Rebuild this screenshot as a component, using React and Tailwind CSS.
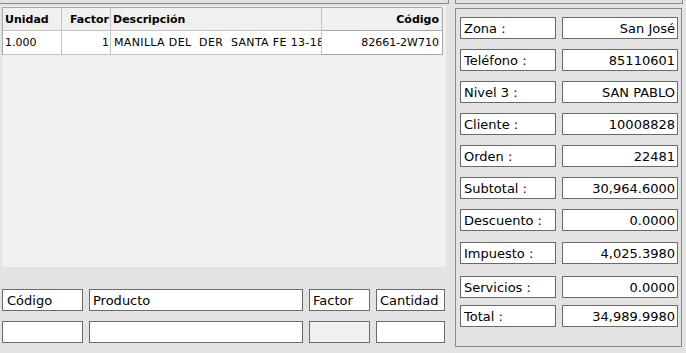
import React from "react";

const rows = [
  { label: "Zona :", value: "San José", mt: "mt-[8px]" },
  { label: "Teléfono :", value: "85110601", mt: "mt-[10px]" },
  { label: "Nivel 3 :", value: "SAN PABLO", mt: "mt-[10px]" },
  { label: "Cliente :", value: "10008828", mt: "mt-[10px]" },
  { label: "Orden :", value: "22481", mt: "mt-[10px]" },
  { label: "Subtotal :", value: "30,964.6000", mt: "mt-[10px]" },
  { label: "Descuento :", value: "0.0000", mt: "mt-[10px]" },
  { label: "Impuesto :", value: "4,025.3980", mt: "mt-[11px]" },
  { label: "Servicios :", value: "0.0000", mt: "mt-[12px]" },
  { label: "Total :", value: "34,989.9980", mt: "mt-[7px]" },
];

const box = "h-[22px] border border-[#6a6a6a] bg-white flex items-center text-[13px] leading-none";

export default function App() {
  return (
    <div
      className="w-[686px] h-[353px] bg-[#e3e3e3] flex text-black overflow-hidden"
      style={{ fontFamily: '"DejaVu Sans", Verdana, sans-serif' }}
    >
      {/* left side */}
      <div className="w-[449px] flex flex-col">
        <div className="h-[4px] w-[449px] border-b border-r border-[#8a8a8a]"></div>
        <div className="mt-[2px] ml-[2px] w-[444px] h-[261px] bg-[#f0f0f0] pt-[1px]">
          <div className="w-[440px] grid grid-cols-[59px_49px_211px_121px] border-l border-t border-[#a8a8a8] text-[11px] leading-none">
            <div className="h-[23px] border-r border-b border-[#c4c4c4] flex items-center px-[2px] font-bold">Unidad</div>
            <div className="h-[23px] border-r border-b border-[#c4c4c4] flex items-center justify-end px-[1px] font-bold">Factor</div>
            <div className="h-[23px] border-r border-b border-[#c4c4c4] flex items-center px-[2px] font-bold">Descripción</div>
            <div className="h-[23px] border-r border-b border-[#a8a8a8] flex items-center justify-end px-[3px] font-bold">Código</div>
            <div className="h-[24px] border-r border-b border-[#c4c4c4] bg-white flex items-center px-[2px]">1.000</div>
            <div className="h-[24px] border-r border-b border-[#c4c4c4] bg-white flex items-center justify-end px-[1px]">1</div>
            <div className="h-[24px] border-r border-b border-[#c4c4c4] bg-white flex items-center pl-[3px] overflow-hidden whitespace-pre tracking-[0.35px]">MANILLA DEL  DER  SANTA FE 13-18</div>
            <div className="h-[24px] border-r border-b border-[#a8a8a8] bg-white flex items-center justify-end px-[3px]">82661-2W710</div>
          </div>
        </div>
        <div className="mt-[22px] ml-[2px] flex gap-[6px]">
          <div className={`${box} w-[81px] pl-[4px]`}>Código</div>
          <div className={`${box} w-[214px] pl-[3px]`}>Producto</div>
          <div className={`${box} w-[61px] pl-[3px]`}>Factor</div>
          <div className={`${box} w-[69px] pl-[3px]`}>Cantidad</div>
        </div>
        <div className="mt-[10px] ml-[2px] flex gap-[6px]">
          <div className={`${box} w-[81px]`}></div>
          <div className={`${box} w-[214px]`}></div>
          <div className={`${box} w-[61px] !bg-[#f0f0f0]`}></div>
          <div className={`${box} w-[69px]`}></div>
        </div>
      </div>

      {/* right side */}
      <div className="ml-[6px] w-[228px] flex flex-col">
        <div className="h-[4px] w-[228px] border-b border-x border-[#8a8a8a]"></div>
        <div className="mt-[4px] w-[227px] h-[339px] border border-[#8a8a8a] pl-[4px]">
          {rows.map((r) => (
            <div key={r.label} className={`flex gap-[6px] ${r.mt}`}>
              <div className={`${box} w-[96px] pl-[3px]`}>{r.label}</div>
              <div className={`${box} w-[116px] justify-end pr-[2px]`}>{r.value}</div>
            </div>
          ))}
        </div>
      </div>
    </div>
  );
}
